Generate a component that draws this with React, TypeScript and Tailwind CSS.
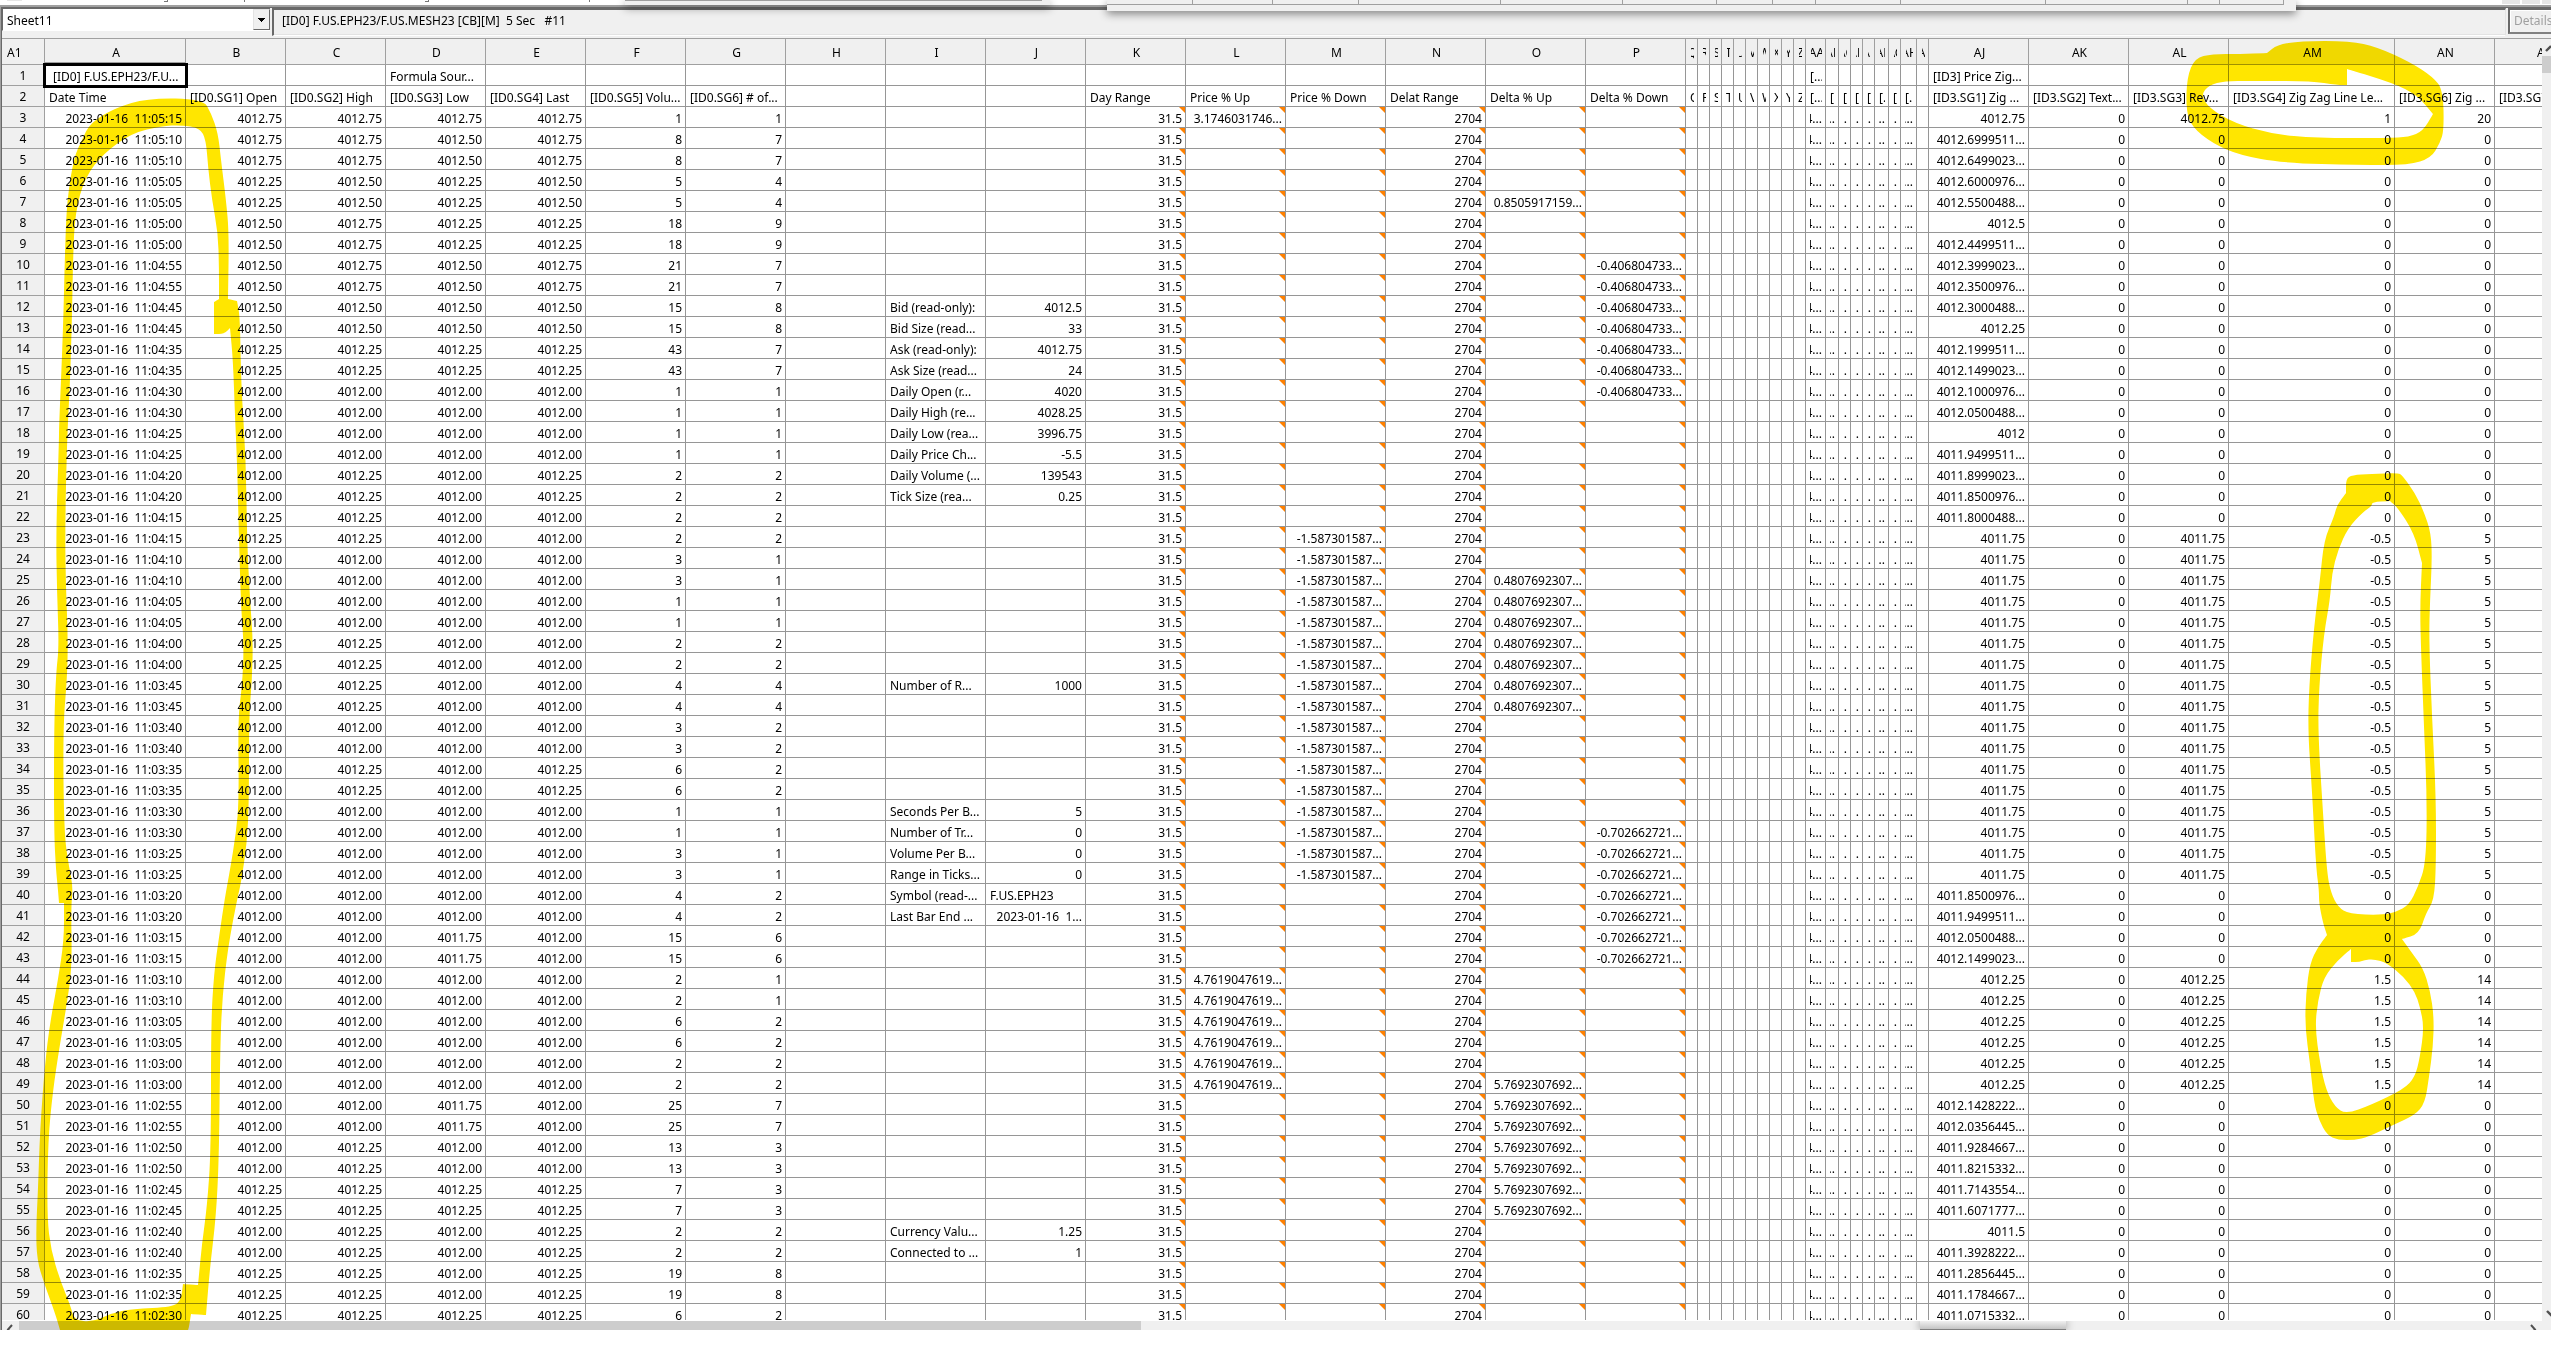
import { ReactNode } from "react";
import clsx from "clsx";

type Cells = Record<string, string>;

const wideColumns = ["B", "C", "D", "E", "F", "G", "H", "I", "J", "K", "L", "M", "N", "O", "P"];
const letterColumns = ["Q", "R", "S", "T", "U", "V", "W", "X", "Y", "Z"];

const columns: { name: string; width: number }[] = [
  { name: "A", width: 141 },
  ...wideColumns.map((name) => ({ name, width: 100 })),
  ...letterColumns.map((name) => ({ name, width: 12 })),
  { name: "AA", width: 20 },
  { name: "AB", width: 13 },
  { name: "AC", width: 12 },
  { name: "AD", width: 12 },
  { name: "AE", width: 12 },
  { name: "AF", width: 14 },
  { name: "AG", width: 12 },
  { name: "AH", width: 16 },
  { name: "AI", width: 12 },
  { name: "AJ", width: 100 },
  { name: "AK", width: 100 },
  { name: "AL", width: 100 },
  { name: "AM", width: 166 },
  { name: "AN", width: 100 },
  { name: "AO", width: 100 },
];

const ROW_HEADER_WIDTH = 43;
const tableWidth = columns.reduce((sum, c) => sum + c.width, ROW_HEADER_WIDTH);

// time, open, high, low, last, volume, # of trades. Every bar fills two rows,
// apart from the first and the last one.
const bars = [
  ["11:05:15", "4012.75", "4012.75", "4012.75", "4012.75", "1", "1"],
  ["11:05:10", "4012.75", "4012.75", "4012.50", "4012.75", "8", "7"],
  ["11:05:05", "4012.25", "4012.50", "4012.25", "4012.50", "5", "4"],
  ["11:05:00", "4012.50", "4012.75", "4012.25", "4012.25", "18", "9"],
  ["11:04:55", "4012.50", "4012.75", "4012.50", "4012.75", "21", "7"],
  ["11:04:45", "4012.50", "4012.50", "4012.50", "4012.50", "15", "8"],
  ["11:04:35", "4012.25", "4012.25", "4012.25", "4012.25", "43", "7"],
  ["11:04:30", "4012.00", "4012.00", "4012.00", "4012.00", "1", "1"],
  ["11:04:25", "4012.00", "4012.00", "4012.00", "4012.00", "1", "1"],
  ["11:04:20", "4012.00", "4012.25", "4012.00", "4012.25", "2", "2"],
  ["11:04:15", "4012.25", "4012.25", "4012.00", "4012.00", "2", "2"],
  ["11:04:10", "4012.00", "4012.00", "4012.00", "4012.00", "3", "1"],
  ["11:04:05", "4012.00", "4012.00", "4012.00", "4012.00", "1", "1"],
  ["11:04:00", "4012.25", "4012.25", "4012.00", "4012.00", "2", "2"],
  ["11:03:45", "4012.00", "4012.25", "4012.00", "4012.00", "4", "4"],
  ["11:03:40", "4012.00", "4012.00", "4012.00", "4012.00", "3", "2"],
  ["11:03:35", "4012.00", "4012.25", "4012.00", "4012.25", "6", "2"],
  ["11:03:30", "4012.00", "4012.00", "4012.00", "4012.00", "1", "1"],
  ["11:03:25", "4012.00", "4012.00", "4012.00", "4012.00", "3", "1"],
  ["11:03:20", "4012.00", "4012.00", "4012.00", "4012.00", "4", "2"],
  ["11:03:15", "4012.00", "4012.00", "4011.75", "4012.00", "15", "6"],
  ["11:03:10", "4012.00", "4012.00", "4012.00", "4012.00", "2", "1"],
  ["11:03:05", "4012.00", "4012.00", "4012.00", "4012.00", "6", "2"],
  ["11:03:00", "4012.00", "4012.00", "4012.00", "4012.00", "2", "2"],
  ["11:02:55", "4012.00", "4012.00", "4011.75", "4012.00", "25", "7"],
  ["11:02:50", "4012.00", "4012.25", "4012.00", "4012.00", "13", "3"],
  ["11:02:45", "4012.25", "4012.25", "4012.25", "4012.25", "7", "3"],
  ["11:02:40", "4012.00", "4012.25", "4012.00", "4012.25", "2", "2"],
  ["11:02:35", "4012.25", "4012.25", "4012.00", "4012.25", "19", "8"],
  ["11:02:30", "4012.25", "4012.25", "4012.25", "4012.25", "6", "2"],
];

const info: Record<number, [string, string]> = {
  12: ["Bid (read-only):", "4012.5"],
  13: ["Bid Size (read...", "33"],
  14: ["Ask (read-only):", "4012.75"],
  15: ["Ask Size (read...", "24"],
  16: ["Daily Open (r...", "4020"],
  17: ["Daily High (re...", "4028.25"],
  18: ["Daily Low (rea...", "3996.75"],
  19: ["Daily Price Ch...", "-5.5"],
  20: ["Daily Volume (...", "139543"],
  21: ["Tick Size (rea...", "0.25"],
  30: ["Number of R...", "1000"],
  36: ["Seconds Per B...", "5"],
  37: ["Number of Tr...", "0"],
  38: ["Volume Per B...", "0"],
  39: ["Range in Ticks...", "0"],
  40: ["Symbol (read-...", "F.US.EPH23"],
  41: ["Last Bar End ...", "2023-01-16  1..."],
  56: ["Currency Valu...", "1.25"],
  57: ["Connected to ...", "1"],
};

// zig zag values of the rows that are no reversal
const zigZag: Record<number, string> = {
  3: "4012.75",
  4: "4012.6999511...",
  5: "4012.6499023...",
  6: "4012.6000976...",
  7: "4012.5500488...",
  8: "4012.5",
  9: "4012.4499511...",
  10: "4012.3999023...",
  11: "4012.3500976...",
  12: "4012.3000488...",
  13: "4012.25",
  14: "4012.1999511...",
  15: "4012.1499023...",
  16: "4012.1000976...",
  17: "4012.0500488...",
  18: "4012",
  19: "4011.9499511...",
  20: "4011.8999023...",
  21: "4011.8500976...",
  22: "4011.8000488...",
  40: "4011.8500976...",
  41: "4011.9499511...",
  42: "4012.0500488...",
  43: "4012.1499023...",
  50: "4012.1428222...",
  51: "4012.0356445...",
  52: "4011.9284667...",
  53: "4011.8215332...",
  54: "4011.7143554...",
  55: "4011.6071777...",
  56: "4011.5",
  57: "4011.3928222...",
  58: "4011.2856445...",
  59: "4011.1784667...",
  60: "4011.0715332...",
};

const titles: Cells = {
  A: "Date Time",
  B: "[ID0.SG1] Open",
  C: "[ID0.SG2] High",
  D: "[ID0.SG3] Low",
  E: "[ID0.SG4] Last",
  F: "[ID0.SG5] Volu...",
  G: "[ID0.SG6] # of...",
  K: "Day Range",
  L: "Price % Up",
  M: "Price % Down",
  N: "Delat Range",
  O: "Delta % Up",
  P: "Delta % Down",
  ...Object.fromEntries(letterColumns.map((l) => [l, l])),
  AA: "[...",
  AB: "[",
  AC: "[",
  AD: "[",
  AE: "[",
  AF: "[.",
  AG: "[",
  AH: "[.",
  AJ: "[ID3.SG1] Zig ...",
  AK: "[ID3.SG2] Text...",
  AL: "[ID3.SG3] Rev...",
  AM: "[ID3.SG4] Zig Zag Line Le...",
  AN: "[ID3.SG6] Zig ...",
  AO: "[ID3.SG7] Zig ...",
};

const between = (n: number, from: number, to: number) => n >= from && n <= to;

function rowCells(n: number): Cells {
  if (n === 1) {
    return { A: "[ID0] F.US.EPH23/F.U...", D: "Formula Sour...", AA: "[...", AJ: "[ID3] Price Zig..." };
  }
  if (n === 2) {
    return titles;
  }
  const [time, open, high, low, last, volume, trades] = bars[Math.floor((n - 2) / 2)];
  const cells: Cells = {
    A: `2023-01-16  ${time}`,
    B: open,
    C: high,
    D: low,
    E: last,
    F: volume,
    G: trades,
    K: "31.5",
    N: "2704",
    AA: "4...",
    AB: "..",
    AC: ".",
    AD: ".",
    AE: ".",
    AF: "..",
    AG: ".",
    AH: "...",
    AJ: zigZag[n],
    AK: "0",
    AL: "0",
    AM: "0",
    AN: "0",
  };
  if (info[n]) [cells.I, cells.J] = info[n];

  if (n === 3) cells.L = "3.1746031746...";
  if (between(n, 44, 49)) cells.L = "4.7619047619...";
  if (between(n, 23, 39)) cells.M = "-1.587301587...";
  if (n === 7) cells.O = "0.8505917159...";
  if (between(n, 25, 31)) cells.O = "0.4807692307...";
  if (between(n, 49, 55)) cells.O = "5.7692307692...";
  if (between(n, 10, 16)) cells.P = "-0.406804733...";
  if (between(n, 37, 43)) cells.P = "-0.702662721...";

  if (n === 3) Object.assign(cells, { AL: "4012.75", AM: "1", AN: "20" });
  if (between(n, 23, 39)) Object.assign(cells, { AJ: "4011.75", AL: "4011.75", AM: "-0.5", AN: "5" });
  if (between(n, 44, 49)) Object.assign(cells, { AJ: "4012.25", AL: "4012.25", AM: "1.5", AN: "14" });
  return cells;
}

const rows = Array.from({ length: 60 }, (_, i) => ({ n: i + 1, cells: rowCells(i + 1) }));

function isLeft(n: number, column: string) {
  return n < 3 || column === "I" || (column === "J" && n === 40);
}

function Cell({ n, column, text }: { n: number; column: string; text?: string }) {
  const selected = n === 1 && column === "A";
  const hasFormula = n > 2 && "KLMNOP".includes(column);

  return (
    <td
      className={clsx(
        "relative h-[21px] border-r border-b border-[#969696] p-0 pt-0.5",
        selected && "outline-3 outline-black -outline-offset-1 z-10"
      )}
    >
      <div
        className={clsx(
          "mr-[3px] ml-1 flex h-[18px] overflow-hidden whitespace-pre leading-[19px]",
          isLeft(n, column) ? "justify-start" : "justify-end",
          selected && "pl-1"
        )}
      >
        {text && <span className="shrink-0">{text}</span>}
      </div>
      {hasFormula && (
        <span className="absolute top-0 right-0 size-1.5 bg-[#ff8000] [clip-path:polygon(0_0,100%_0,100%_100%)]" />
      )}
    </td>
  );
}

function Grid() {
  return (
    <table
      className="table-fixed border-separate border-spacing-0 bg-white"
      style={{ width: tableWidth }}
    >
      <colgroup>
        <col style={{ width: ROW_HEADER_WIDTH }} />
        {columns.map((c) => (
          <col key={c.name} style={{ width: c.width }} />
        ))}
      </colgroup>
      <thead>
        <tr className="bg-[#f0f0f0]">
          <th className="h-[26px] border-r border-b border-[#a0a0a0] p-0 pt-0.5 pl-[5px] text-left font-normal">
            A1
          </th>
          {columns.map(({ name }) => (
            <th
              key={name}
              scope="col"
              className={clsx(
                "h-[26px] border-r border-b border-[#a0a0a0] p-0 pt-0.5 font-normal",
                name === "A" && "shadow-[inset_0_-2px_0_#a0a0a0]"
              )}
            >
              <div className="mr-[3px] ml-[5px] flex justify-center overflow-hidden">
                <span className="shrink-0">{name}</span>
              </div>
            </th>
          ))}
        </tr>
      </thead>
      <tbody>
        {rows.map(({ n, cells }) => (
          <tr key={n}>
            <th
              scope="row"
              className="h-[21px] border-r border-b border-[#a0a0a0] bg-[#f0f0f0] p-0 pt-0.5 text-center leading-[18px] font-normal"
            >
              {n}
            </th>
            {columns.map(({ name }) => (
              <Cell key={name} n={n} column={name} text={cells[name]} />
            ))}
          </tr>
        ))}
      </tbody>
    </table>
  );
}

function Toolbar() {
  return (
    <div className="flex h-[30px] shrink-0 items-start bg-[#f0f0f0]">
      <div className="relative h-[23px] w-[268px] shrink-0 border-t border-l border-[#696969] border-b border-b-white bg-white">
        <select
          aria-label="Sheet"
          className="h-full w-full appearance-none bg-white pt-0.5 pl-1 leading-5 outline-none"
        >
          <option>Sheet11</option>
        </select>
        <span className="pointer-events-none absolute top-0 right-0 flex h-[21px] w-[17px] items-center justify-center border border-[#696969] border-t-[#e3e3e3] border-l-[#e3e3e3] bg-[#f0f0f0]">
          <svg width="7" height="4" viewBox="0 0 7 4" shapeRendering="crispEdges">
            <path d="M0 0H7L3.5 4Z" fill="#000" />
          </svg>
        </span>
      </div>
      <div className="ml-0.5 h-[28px] min-w-0 flex-1 border-t-2 border-l-2 border-r border-[#696969] border-r-[#e3e3e3] border-b border-b-white pl-2 leading-[22px] whitespace-pre shadow-[inset_0_-1px_0_#e3e3e3]">
        {"[ID0] F.US.EPH23/F.US.MESH23 [CB][M]  5 Sec   #11"}
      </div>
      <div className="ml-0.5 h-[26px] w-[43px] shrink-0 overflow-hidden">
        <button
          disabled
          className="h-full w-[60px] border-2 border-[#696969] border-b-[#808080] pl-1 text-left leading-[22px] text-[#a0a0a0] shadow-[inset_1px_1px_0_#fff]"
        >
          Details
        </button>
      </div>
    </div>
  );
}

// bottom edges of the windows that hang over the sheet's upper side
function Window({ className, children }: { className: string; children?: ReactNode }) {
  return (
    <div className={clsx("absolute top-0 bg-[#f0f0f0] shadow-[0_3px_8px_rgba(0,0,0,0.45)]", className)}>
      {children}
    </div>
  );
}

const dividers = [85, 165, 251, 393, 515, 609, 665, 708, 793, 938, 1080, 1112];

function Windows() {
  return (
    <>
      <Window className="left-[625px] h-[5px] w-[425px]">
        <div className="mr-2 h-px bg-[#a0a0a0]" />
      </Window>
      <Window className="left-[1107px] h-[11px] w-[1189px]">
        <svg width="1177" height="5" shapeRendering="crispEdges">
          <path
            d={dividers.map((x) => `M${x}.5 0V4`).join("") + "M0 4.5H1177M1176.5 0V4"}
            stroke="#a0a0a0"
            fill="none"
          />
        </svg>
      </Window>
    </>
  );
}

function VerticalScrollbar() {
  return (
    <div className="flex w-[9px] shrink-0 flex-col bg-[#f0f0f0] pt-px">
      <svg width="9" height="16" viewBox="0 0 9 16">
        <path d="M4 11L9 6" stroke="#505050" strokeWidth="2.4" fill="none" />
      </svg>
      <div className="h-[17px] bg-[#cdcdcd]" />
      <div className="flex-1" />
      <svg width="9" height="16" viewBox="0 0 9 16">
        <path d="M5 6L10 11" stroke="#505050" strokeWidth="2.4" fill="none" />
      </svg>
    </div>
  );
}

function HorizontalScrollbar() {
  return (
    <div className="flex h-[9px] shrink-0 overflow-hidden bg-[#f0f0f0]">
      <svg width="17" height="9" viewBox="0 0 17 9" className="shrink-0">
        <path d="M10 4L6 8.5L10 13" stroke="#505050" strokeWidth="2" fill="none" />
      </svg>
      <div className="w-[44%] bg-[#cdcdcd]" />
      <div className="flex-1" />
      <div className="relative mr-[464px] h-full w-[146px] border-b border-[#808080] shadow-[0_0_10px_rgba(0,0,0,0.4)] [clip-path:inset(-9px_-12px_0_-12px)]">
        <div className="h-full bg-gradient-to-b from-[#f0f0f0] to-[#c4c4c4]" />
      </div>
      <svg width="21" height="9" viewBox="0 0 21 9" className="shrink-0">
        <path d="M1 4L5 8.5L1 13" stroke="#505050" strokeWidth="2" fill="none" />
      </svg>
    </div>
  );
}

// Marker strokes. A point that is given twice makes a sharp corner.
const markerLoops = [
  "148,98 203,99 211,113 218,133 221,160 226,200 229,233 228,299 228,299 237,301 237,301 240,317 241,383 246,460 247,540 250,600 253,640 252,680 249,717 249,800 247,843 241,883 237,900 228,947 222,1000 220,1057 219,1157 216,1217 210,1267 206,1315 206,1315 191,1314 191,1314 189,1327 188,1330 188,1330 60,1330 60,1330 55,1313 44,1283 37,1260 36,1230 38,1190 40,1130 45,1063 50,1023 58,980 64,940 64,903 64,903 59,903 59,903 58,890 56,870 54,833 54,730 56,673 59,647 57,593 56,533 59,440 59,427 63,333 65,250 67,200 74,157 82,140 90,123 115,108",
  "162,126 181,125 200,128 206,140 208,167 212,200 218,233 219,267 219,299 219,299 214,302 214,302 214,334 214,334 224,334 230,328 230,328 233,360 235,417 237,460 239,540 241,607 244,647 242,687 238,717 239,800 236,833 230,870 225,897 219,937 214,973 211,1023 211,1150 207,1207 202,1243 198,1285 198,1285 183,1284 183,1284 181,1300 173,1307 132,1309 112,1313 93,1322 74,1320 71,1307 60,1280 51,1250 47,1217 48,1140 53,1090 59,1050 67,1003 72,967 71,907 73,887 69,867 64,833 63,727 67,680 68,640 66,590 65,533 67,440 70,383 72,317 73,260 75,213 85,177 104,153 132,133",
  "2267,53 2267,53 2277,45 2300,41 2350,41 2377,47 2410,62 2433,77 2443,90 2444,130 2440,143 2431,158 2409,165 2360,165 2283,163 2239,155 2212,143 2192,127 2186,110 2187,77 2195,58 2212,54 2240,54",
  "2347,69 2347,69 2393,83 2417,95 2433,114 2433,114 2423,131 2409,137 2387,138 2316,138 2272,134 2234,123 2209,108 2201,95 2209,85 2225,81 2250,81 2310,81 2338,85 2347,85 2347,85",
  "2346,479 2352,475 2371,474 2398,473 2402,475 2415,493 2424,512 2431,533 2432,560 2430,600 2429,640 2432,717 2436,797 2436,867 2434,900 2426,913 2419,934 2402,939 2402,939 2412,953 2423,968 2430,990 2434,1017 2433,1047 2429,1077 2425,1103 2415,1115 2393,1125 2368,1137 2355,1140 2338,1140 2327,1135 2319,1120 2314,1103 2310,1063 2305,1027 2306,993 2310,963 2318,947 2327,935 2327,935 2323,923 2319,903 2319,890 2316,867 2312,790 2308,733 2309,687 2314,627 2320,580 2324,540 2334,517 2337,505 2346,493 2346,493",
  "2372,502 2390,501 2390,501 2398,508 2414,533 2422,563 2422,563 2420,607 2421,650 2424,727 2427,800 2426,863 2418,887 2409,905 2396,912 2382,915 2349,914 2338,907 2331,893 2327,873 2323,813 2318,733 2319,687 2324,633 2330,600 2332,573 2338,550 2348,528 2363,512 2372,506",
  "2351,949 2351,949 2351,962 2351,962 2360,962 2364,960 2374,959 2387,963 2404,977 2415,992 2420,1007 2424,1027 2420,1057 2415,1077 2404,1089 2371,1105 2346,1114 2335,1107 2326,1090 2320,1063 2315,1027 2318,1000 2324,977 2338,960",
];

function smooth(points: string) {
  const p = points.split(" ").map((s) => s.split(",").map(Number));
  const mid = (i: number) => {
    const a = p[i % p.length];
    const b = p[(i + 1) % p.length];
    return `${(a[0] + b[0]) / 2} ${(a[1] + b[1]) / 2}`;
  };
  return `M${mid(p.length - 1)}` + p.map(([x, y], i) => `Q${x} ${y} ${mid(i)}`).join("") + "Z";
}

function Marker() {
  return (
    <svg
      width="2551"
      height="1349"
      className="pointer-events-none absolute top-0 left-0 z-20 max-w-none mix-blend-multiply"
    >
      <path d={markerLoops.map(smooth).join("")} fill="#ffe600" fillRule="evenodd" />
    </svg>
  );
}

export default function App() {
  return (
    <div className="relative isolate flex h-screen flex-col overflow-hidden bg-white pb-[19px] font-['Noto_Sans','Open_Sans',sans-serif] text-[12px] text-black">
      <div className="flex h-[5px] shrink-0 justify-between">
        <svg width="620" height="5" shapeRendering="crispEdges">
          <path d="M7 0H22V1H7Z" fill="#e6e6e6" />
          <path d="M164 1H167V0M244.5 0V2M425 1H428V0M589.5 0V2" stroke="#777" fill="none" />
        </svg>
        <div className="flex h-1 gap-0.5">
          <div className="w-[18px] bg-[#e6e6e6]" />
          <div className="w-[18px] bg-[#e6e6e6]" />
          <div className="w-[9px] bg-[#e6e6e6]" />
        </div>
      </div>
      <div className="flex min-h-0 flex-1 flex-col border-t-2 border-l border-[#a0a0a0]">
        <div className="flex min-h-0 flex-1 flex-col border-t border-l border-[#696969]">
          <Toolbar />
          <div className="flex min-h-0 flex-1 border-t border-[#a0a0a0]">
            <div className="mb-px min-w-0 flex-1 overflow-hidden">
              <Grid />
            </div>
            <VerticalScrollbar />
          </div>
          <HorizontalScrollbar />
        </div>
      </div>
      <Windows />
      <Marker />
    </div>
  );
}
